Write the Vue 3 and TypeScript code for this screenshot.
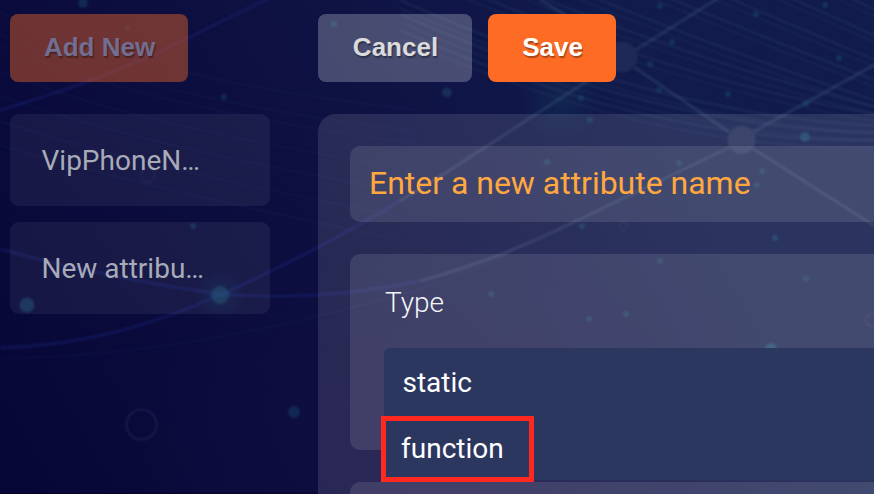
<script setup lang="ts">
interface Dot { x: number; y: number; r: number; o: number }

const attributes: string[] = ['VipPhoneN…', 'New attribu…']
const types: string[] = ['static', 'function']

const dots: Dot[] = [
  [83, 3, 5, 0.4], [224, 97, 3, 0.4], [127, 28, 2.5, 0.3], [27, 305, 7.5, 0.5], [220, 295, 9, 0.45],
  [193, 226, 3, 0.4], [294, 412, 6, 0.4], [334, 24, 3, 0.4], [581, 98, 3, 0.4], [590, 120, 3, 0.4],
  [660, 6, 3, 0.4], [756, 14, 3, 0.4], [825, 5, 3, 0.4], [672, 42, 3, 0.4], [650, 64, 3, 0.4],
  [659, 90, 3, 0.4], [728, 94, 3, 0.4], [839, 58, 3, 0.4], [806, 104, 3, 0.4], [805, 137, 5, 0.6],
  [547, 162, 3, 0.4], [679, 163, 3, 0.4], [762, 171, 3, 0.4], [757, 185, 3, 0.4], [582, 226, 3, 0.4],
  [775, 238, 3, 0.5], [660, 261, 3, 0.4], [491, 294, 3, 0.4], [589, 319, 3, 0.4], [626, 314, 3, 0.4],
  [806, 279, 3, 0.4], [771, 349, 6, 0.6],
].map(([x, y, r, o]) => ({ x, y, r, o: o * 0.8 }))

const strandEnds: [number, number][] = [
  [-120, 12], [-90, 38], [-58, 62], [-30, 82], [3, 102], [26, 108], [50, 115], [88, 126], [102, 133], [118, 140],
]
const strand = (a: number, b: number): string => `M400 ${a - 88} Q660 ${a + 28} 880 ${b}`
const strands: string[] = strandEnds.map(([a, b]) => strand(a, b))
const twins: string[] = strandEnds.map(([a, b]) => strand(a + 8, b + 7))

const leftStrands: string[] = [0, 22, 34, 60, 84, 110, 134].map(
  (d) => `M-5 ${10 + d} Q150 ${82 + d * 0.8} 420 ${110 + d}`,
)
</script>

<template>
  <main class="page">
    <svg class="backdrop" viewBox="0 0 874 494" aria-hidden="true">
      <defs>
        <linearGradient id="base" gradientUnits="userSpaceOnUse" x1="0" y1="430" x2="640" y2="60">
          <stop offset="0" stop-color="#070737" />
          <stop offset=".5" stop-color="#0d0f40" />
          <stop offset="1" stop-color="#111b4c" />
        </linearGradient>
        <radialGradient id="violet">
          <stop offset="0" stop-color="#130e45" stop-opacity=".7" />
          <stop offset="1" stop-color="#130e45" stop-opacity="0" />
        </radialGradient>
        <radialGradient id="teal">
          <stop offset="0" stop-color="#14506d" stop-opacity=".24" />
          <stop offset="1" stop-color="#14506d" stop-opacity="0" />
        </radialGradient>
        <filter id="soft" filterUnits="userSpaceOnUse" x="0" y="0" width="874" height="494" color-interpolation-filters="sRGB">
          <feGaussianBlur stdDeviation=".9" />
        </filter>
      </defs>
      <rect width="874" height="494" fill="url(#base)" />
      <ellipse cx="430" cy="450" rx="300" ry="200" fill="url(#violet)" />
      <circle cx="560" cy="100" r="40" fill="url(#teal)" />
      <circle cx="220" cy="295" r="26" fill="url(#teal)" />
      <g fill="none" filter="url(#soft)">
        <g stroke="#5882a0" stroke-width="2">
          <path v-for="p in strands" :key="p" :d="p" stroke-opacity=".15" />
          <path v-for="p in twins" :key="p" :d="p" stroke-opacity=".09" />
        </g>
        <g stroke="#304080" stroke-opacity=".13" stroke-width="1.6">
          <path v-for="p in leftStrands" :key="p" :d="p" />
          <path d="M0 358 Q140 358 310 318 T520 245" />
        </g>
        <g stroke="#6285a4" stroke-opacity=".2" stroke-width="3">
          <path d="M634 51 L720 -3 M634 67 L729 132 M753 132 L878 63 M752 148 L878 228" />
          <path d="M730 147 L574 222 Q500 259 420 281" />
          <path d="M604 70 L450 170 L400 201" />
          <path d="M540 0 L566 15" />
        </g>
        <g stroke="#2434a0" stroke-opacity=".27" stroke-width="3">
          <path d="M420 281 Q320 302 220 294 Q105 278 0 249" />
          <path d="M400 201 Q310 255 220 295 Q110 345 0 348" />
          <path d="M0 110 Q100 82 190 37 T280 -6" />
        </g>
        <g stroke="#7068a0" stroke-opacity=".16" stroke-width="2.2">
          <circle cx="141.500" cy="424.500" r="15" />
          <circle cx="148" cy="175" r="7" stroke-opacity=".1" />
          <circle cx="623" cy="226" r="4" stroke-width="1.500" />
          <circle cx="872" cy="320" r="6" />
        </g>
      </g>
      <g filter="url(#soft)">
        <circle v-for="d in dots" :key="`${d.x}-${d.y}`" :cx="d.x" :cy="d.y" :r="d.r" fill="#1b6480" :fill-opacity="d.o" />
        <circle cx="622" cy="57" r="15.500" fill="#202955" />
        <circle cx="741.500" cy="140" r="14" fill="#25305a" />
        <circle cx="447" cy="92.500" r="5" fill="#182e58" />
      </g>
      <rect y="492.500" width="318" height="1.500" fill="#04041f" fill-opacity=".5" />
    </svg>

    <aside class="sidebar">
      <button class="btn add" type="button" disabled>Add New</button>
      <ul class="attributes">
        <li v-for="name in attributes" :key="name">{{ name }}</li>
      </ul>
    </aside>

    <section class="editor">
      <div class="actions">
        <button class="btn cancel" type="button">Cancel</button>
        <button class="btn save" type="button">Save</button>
      </div>
      <div class="panel">
        <div class="card name">Enter a new attribute name</div>
        <div class="card type">
          <span class="label">Type</span>
          <div class="options">
            <div v-for="t in types" :key="t" class="option" :class="{ marked: t === 'function' }">
              <span>{{ t }}</span>
            </div>
          </div>
        </div>
        <div class="card next"></div>
      </div>
    </section>
  </main>
</template>

<style>
body {
  margin: 0;
  overflow: hidden;
  background: #0b0c3d;
}
</style>

<style scoped>
.page {
  position: relative;
  box-sizing: border-box;
  width: 874px;
  height: 494px;
  overflow: hidden;
  display: flex;
  gap: 48px;
  padding: 14px 0 0 10px;
  font-family: Roboto, "Liberation Sans", sans-serif;
  font-size: 28px;
}
.backdrop {
  position: absolute;
  inset: 0;
  width: 874px;
  height: 494px;
}
.sidebar,
.editor {
  position: relative;
  display: flex;
  flex-direction: column;
  align-items: flex-start;
  gap: 32px;
}
.sidebar { flex: 0 0 260px; }
.editor { flex: 1; min-width: 0; }
.btn {
  height: 68px;
  padding: 0 0 2px 1px;
  border: 0;
  border-radius: 8px;
  font: bold 26px/66px "Liberation Sans", Arial, sans-serif;
  text-shadow: 1px 2px 1px rgba(0, 0, 0, .34);
}
.add {
  width: 178px;
  color: #716e91;
  background: rgba(253, 107, 37, .41);
}
.cancel {
  width: 154px;
  color: #dbdbdc;
  background: rgba(255, 255, 255, .24);
}
.save {
  width: 128px;
  color: #fff;
  background: #fd6b25;
}
.actions { display: flex; gap: 16px; }
.attributes {
  width: 260px;
  margin: 0;
  padding: 0;
  list-style: none;
  display: flex;
  flex-direction: column;
  gap: 16px;
}
.attributes li {
  box-sizing: border-box;
  height: 92px;
  padding-left: 31.5px;
  border-radius: 9px;
  line-height: 94px;
  color: #a7abb8;
  background: rgba(255, 255, 255, .06);
}
.panel {
  box-sizing: border-box;
  width: 100%;
  height: 460px;
  padding: 32px 0 0 32px;
  border-radius: 18px 0 0 0;
  background: rgba(255, 255, 255, .11);
  display: flex;
  flex-direction: column;
  gap: 32px;
}
.card {
  box-sizing: border-box;
  flex-shrink: 0;
  border-radius: 10px 0 0 10px;
  background: rgba(255, 255, 255, .11);
}
.name {
  height: 76px;
  padding-left: 19px;
  font-size: 32px;
  line-height: 74px;
  letter-spacing: -.02px;
  color: #ffa840;
}
.type {
  height: 196px;
  padding: 28px 0 0 34px;
}
.label {
  display: block;
  height: 66px;
  padding-left: 1px;
  line-height: 42px;
  font-weight: 300;
  color: #f5f5f8;
}
.options {
  position: relative;
  z-index: 1;
  border-radius: 6px 0 0 0;
  background: #2c3760;
  color: #fff;
}
.option {
  box-sizing: border-box;
  height: 66px;
  padding-left: 18.5px;
  line-height: 70px;
}
.marked {
  width: 153px;
  margin-left: -3px;
  padding-left: 15px;
  border: 5px solid #ff291f;
  line-height: 56px;
  position: relative;
  top: 2px;
}
.next { height: 100px; }
</style>
